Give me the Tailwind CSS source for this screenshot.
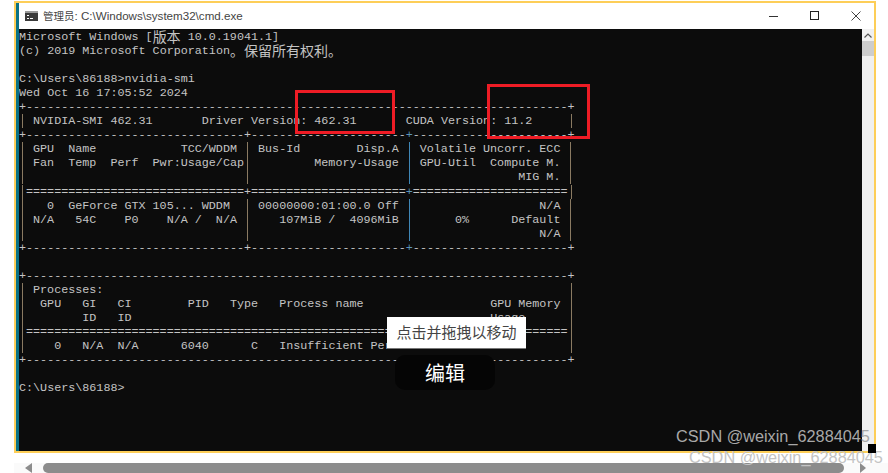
<!DOCTYPE html>
<html lang="zh">
  <head>
    <meta charset="UTF-8" />
    <meta name="viewport" content="width=device-width, initial-scale=1.0" />
    <title>cmd</title>
    <script src="https://cdn.jsdelivr.net/npm/@tailwindcss/browser@4"></script>
  </head>
  <body class="relative w-[888px] h-[473px] overflow-hidden bg-white">
    <!-- window -->
    <div class="ml-[14px] mt-[1px] w-[862px] h-[452px] border-2 border-[#fdce58] flex">
      <div class="w-[3px] bg-[#0b7285]"></div>
      <div class="flex-1 flex flex-col min-w-0">
        <div class="h-[26px] flex items-center bg-white text-[#444] text-[11.6px] font-['Liberation_Sans','Noto_Sans_CJK_SC',sans-serif]">
          <svg class="ml-[6px] mr-[5px]" width="13" height="10" viewBox="0 0 13 10">
            <rect width="13" height="10" fill="#3a3a3a" />
            <rect x="0" y="0" width="13" height="2" fill="#9a9a9a" />
            <path d="M2 4h2v1H2zM2 7h2v1H2zM5 7h3v1H5z" fill="#fff" />
          </svg>
          <span><span class="text-[10.5px]">管理员</span>: C:\Windows\system32\cmd.exe</span>
          <div class="ml-auto flex items-center">
            <svg width="40" height="12" viewBox="0 0 40 12"><path d="M0 6.5h9" stroke="#333" /></svg>
            <svg class="ml-[1px]" width="40" height="12" viewBox="0 0 40 12"><rect x="0.5" y="1.5" width="8" height="8" fill="none" stroke="#222" /></svg>
            <svg class="ml-[1px] mr-[5px]" width="18" height="12" viewBox="0 0 18 12"><path d="M0.5 1.5l9 9M9.5 1.5l-9 9" stroke="#444" fill="none" /></svg>
          </div>
        </div>
        <div class="flex-1 flex min-h-0">
          <pre id="term" class="flex-1 overflow-hidden pt-[1px] bg-[#0c0c0c] text-[#c4c4c4] text-[11.72px] leading-[14.04px] font-['Liberation_Mono','Noto_Sans_CJK_SC',monospace]">Microsoft Windows [<span class="relative top-[1px] text-[14px] leading-[14px] align-top">版本</span> 10.0.19041.1]
(c) 2019 Microsoft Corporation<span class="relative top-[1px] text-[14px] leading-[14px] align-top">。保留所有权利。</span>

C:\Users\86188&gt;nvidia-smi
Wed Oct 16 17:05:52 2024
+-----------------------------------------------------------------------------+
| NVIDIA-SMI 462.31       Driver Version: 462.31       CUDA Version: 11.2     |
+-------------------------------+----------------------<span class="text-[#5b93b8]">+</span>----------------------+
| GPU  Name            TCC/WDDM | Bus-Id        Disp.A ¦ Volatile Uncorr. ECC |
| Fan  Temp  Perf  Pwr:Usage/Cap|         Memory-Usage ¦ GPU-Util  Compute M. |
|                               |                      ¦               MIG M. |
|===============================+======================<span class="text-[#5b93b8]">+</span>======================|
|   0  GeForce GTX 105... WDDM  | 00000000:01:00.0 Off ¦                  N/A |
| N/A   54C    P0    N/A /  N/A |    107MiB /  4096MiB ¦      0%      Default |
|                               |                      ¦                  N/A |
+-------------------------------+----------------------<span class="text-[#5b93b8]">+</span>----------------------+

+-----------------------------------------------------------------------------+
| Processes:                                                                  |
|  GPU   GI   CI        PID   Type   Process name                  GPU Memory |
|        ID   ID                                                   Usage      |
|=============================================================================|
|    0   N/A  N/A      6040      C   Insufficient Permissions      N/A        |
+-----------------------------------------------------------------------------+

C:\Users\86188&gt;</pre>
          <div class="w-[12px] bg-[#f0f0f0] flex flex-col items-center">
            <svg class="mt-[4px] mb-[3px]" width="8" height="5" viewBox="0 0 8 5"><path d="M0.5 4.5L4 1l3.5 3.5" stroke="#555" stroke-width="1.2" fill="none" /></svg>
            <div class="w-full h-[15px] bg-[#cdcdcd]"></div>
          </div>
        </div>
      </div>
    </div>

    <!-- horizontal scrollbar of the page -->
    <div class="ml-[14px] mt-[10px] w-[874px] h-[10px] flex items-center bg-[#fafafa]">
      <svg class="ml-[11px] mr-[11px]" width="7" height="10" viewBox="0 0 7 10"><path d="M7 0v10L0 5z" fill="#8c8c8c" /></svg>
      <div class="w-[801px] h-[10px] rounded-l-[5px] rounded-r-[5px] bg-[#8c8c8c]"></div>
      <svg class="ml-[16px]" width="6" height="10" viewBox="0 0 6 10"><path d="M0 0v10l6-5z" fill="#8c8c8c" /></svg>
    </div>

    <!-- red marks -->
    <div class="absolute left-[295px] top-[90px] w-[100px] h-[44px] border-[3px] border-[#ee1c25]"></div>
    <div class="absolute left-[487px] top-[84px] w-[103px] h-[55px] border-[3px] border-[#ee1c25]"></div>

    <!-- hover tooltip and edit pill -->
    <div class="absolute left-[387px] top-[317px] w-[139px] h-[32px] bg-white border-b border-[#777] flex items-center justify-center text-[15px] text-[#444] font-['Noto_Sans_CJK_SC',sans-serif]">点击并拖拽以移动</div>
    <div class="absolute left-[395px] top-[355px] w-[100px] h-[35px] rounded-[10px] bg-[#050505] flex items-center justify-center text-white text-[20px] font-['Noto_Sans_CJK_SC',sans-serif]">编辑</div>

    <!-- watermarks -->
    <div class="absolute left-[676px] top-[426px] text-[16.3px] leading-[20px] text-[#a8a8a8] whitespace-nowrap font-['Liberation_Sans',sans-serif]">CSDN @weixin_62884045</div>
    <div class="absolute left-[689px] top-[447px] text-[16.3px] leading-[20px] text-[#c4c4c4] whitespace-nowrap font-['Liberation_Sans',sans-serif]">CSDN @weixin_62884045</div>
    <div class="absolute left-[868px] top-[444px] w-[8px] h-[9px] bg-black"></div>

    <script>
      // table pipes are drawn as solid lines, they have no gaps in cmd
      const tan = '<span class="inline-block align-top w-[4px] h-[14px] ml-[3px] border-l border-[#8a7a62]"></span>';
      const blue = '<span class="inline-block align-top w-[4px] h-[14px] ml-[3px] border-l border-[#3f86b5]"></span>';
      const term = document.getElementById("term");
      term.innerHTML = term.innerHTML.replace(/\|/g, tan).replace(/¦/g, blue);
    </script>
  </body>
</html>
